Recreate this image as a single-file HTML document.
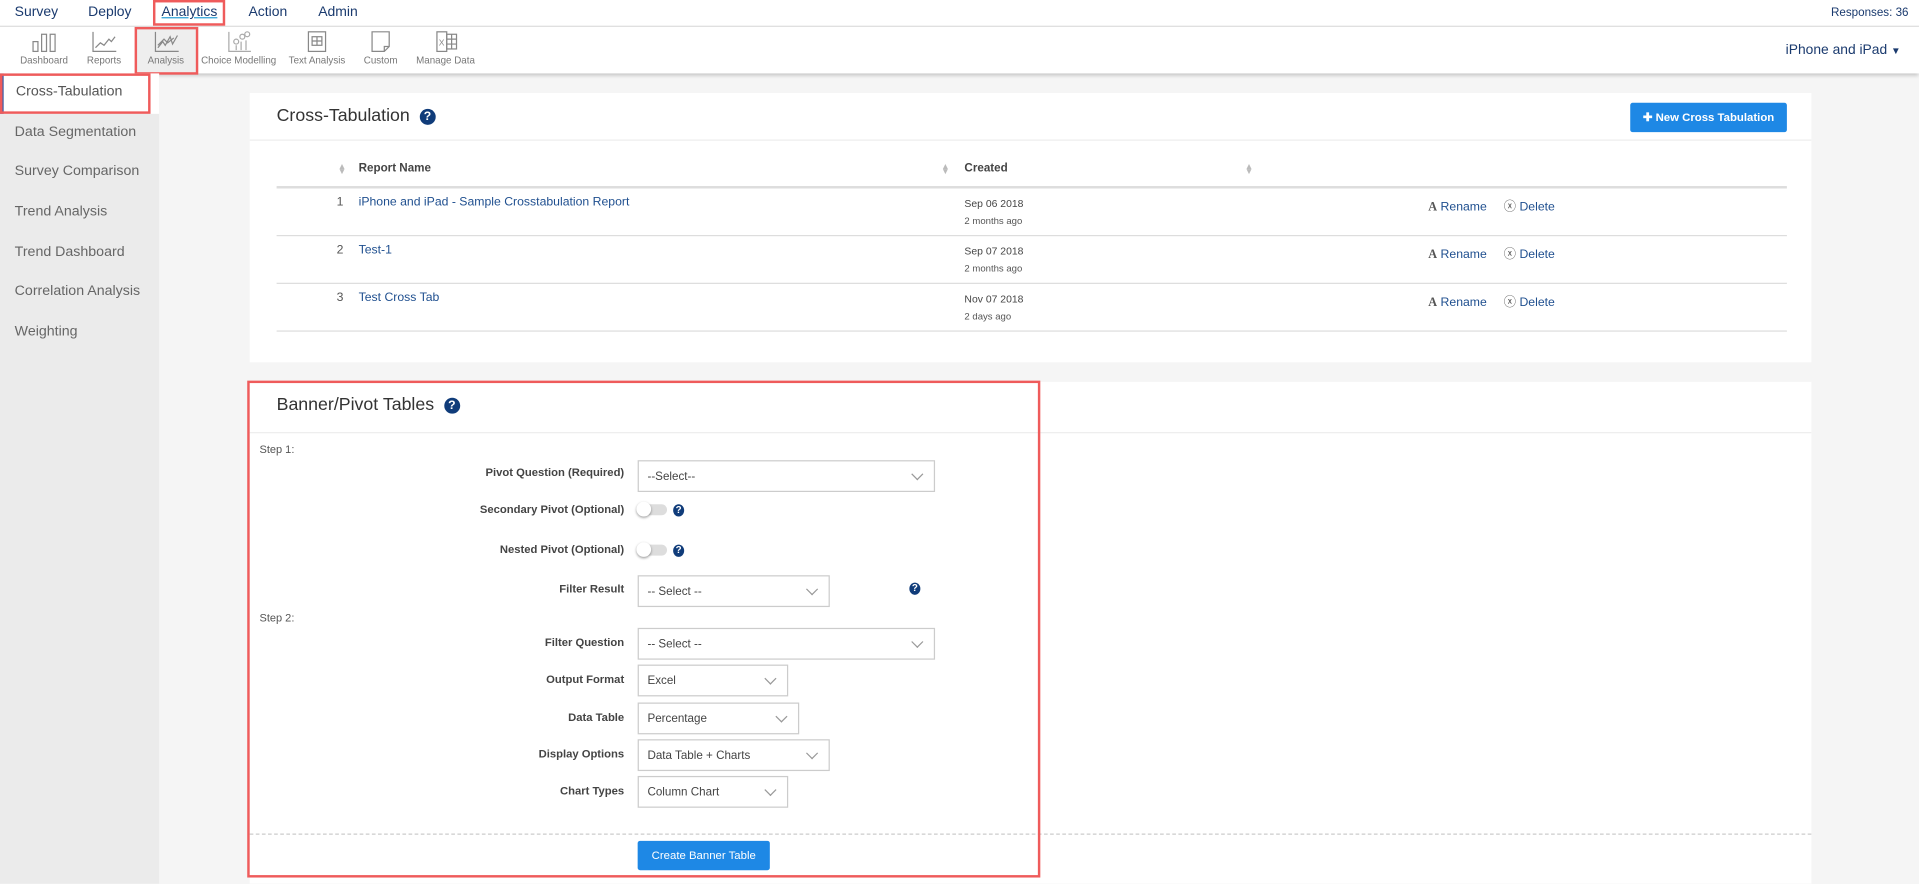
<!DOCTYPE html>
<html><head><meta charset="utf-8">
<style>
*{box-sizing:border-box;margin:0;padding:0}
html,body{width:1919px;height:884px;overflow:hidden;background:#f5f5f5}
#w{width:1568px;height:722px;transform:scale(1.2239);transform-origin:0 0;position:relative;font-family:"Liberation Sans",sans-serif;color:#333;background:#f5f5f5}
.a{position:absolute;white-space:nowrap}
.top{left:0;top:0;width:1568px;height:22px;background:#fff;border-bottom:1px solid #ddd}
.top span{position:absolute;top:4px;font-size:11.4px;color:#1a3a6e}
.sub{left:0;top:22px;width:1568px;height:38px;background:#fff;box-shadow:0 2px 3px rgba(0,0,0,.2)}
.ic{position:absolute;top:0;height:38px;text-align:center;font-size:8px;color:#777}
.ic svg{display:block;margin:3px auto 2px}
.side{left:0;top:60px;width:130px;height:662px;background:#ebebeb}
.side div{height:32.7px;line-height:30px;padding-left:12px;font-size:11.6px;color:#666}
.card{background:#fff}
.q{display:inline-block;width:13px;height:13px;border-radius:50%;background:#103c7a;color:#fff;font:bold 10px/13px "Liberation Sans",sans-serif;text-align:center}
.qs{width:9px;height:10px;font-size:8px;line-height:10px}
.lbl{font-size:9.2px;font-weight:bold;color:#444;text-align:right;width:300px;left:210px}
.sel{border:1px solid #ccc;background:#fff;font-size:9.5px;color:#444;padding:7px 0 0 7px;height:26px}
.sel:after{content:"";position:absolute;right:10px;top:7px;width:6px;height:6px;border-right:1px solid #999;border-bottom:1px solid #999;transform:rotate(45deg)}
.tog{width:24px;height:9px;border-radius:5px;background:#ddd}
.tog:before{content:"";position:absolute;left:-1px;top:-2px;width:12px;height:12px;border-radius:50%;background:#fff;box-shadow:0 1px 2px rgba(0,0,0,.4)}
.lnk{color:#1f4f8f;font-size:10px}
.dt{font-size:8.5px;color:#444}
.sm{font-size:7.8px;color:#555}
.hl{height:1px;background:#ddd}
.srt{font-size:7px;color:#bbb;line-height:4px}
.ttl{font-size:14.5px;color:#333}
</style></head><body><div id="w">
<div class="a top">
<span style="left:12px">Survey</span><span style="left:72px">Deploy</span>
<span style="left:132px;text-decoration:underline;text-decoration-color:#2a9fd6">Analytics</span>
<span style="left:203px">Action</span><span style="left:260px">Admin</span>
<span style="left:1496px;top:5px;font-size:9.5px">Responses: 36</span>
</div>
<div class="a" style="left:125px;top:0;width:59px;height:21px;border:2px solid #ef5b5b"></div>
<div class="a sub">
<div class="ic" style="left:10px;width:52px"><svg width="22" height="18" viewBox="0 0 22 18" fill="none" stroke="#888"><rect x="2" y="9" width="4" height="8"/><rect x="9" y="3" width="4" height="14"/><rect x="16" y="3" width="4" height="14"/></svg>Dashboard</div>
<div class="ic" style="left:62px;width:46px"><svg width="22" height="18" viewBox="0 0 22 18" fill="none" stroke="#888"><path d="M2 1V17H21M4 14L8 10L11 12L15 7L17 9L20 5"/></svg>Reports</div>
<div class="ic" style="left:110px;width:51px;background:#eee"><svg width="22" height="18" viewBox="0 0 22 18" fill="none" stroke="#888"><path d="M2 1V17H21M4 14L8 9L10 12L14 5L16 11L20 4M4 12L9 7L12 10L17 6"/></svg>Analysis</div>
<div class="ic" style="left:162px;width:66px"><svg width="22" height="18" viewBox="0 0 22 18" fill="none" stroke="#aaa"><path d="M3 1V17H21M9 16V12M13 16V9M17 16V8"/><circle cx="9" cy="9" r="2"/><circle cx="14" cy="5" r="2"/><circle cx="18" cy="3" r="2"/></svg>Choice Modelling</div>
<div class="ic" style="left:232px;width:54px"><svg width="22" height="18" viewBox="0 0 22 18" fill="none" stroke="#888"><rect x="4" y="1" width="14" height="16"/><rect x="7" y="5" width="8" height="7"/><path d="M11 5V12M7 8.5H15"/></svg>Text Analysis</div>
<div class="ic" style="left:290px;width:42px"><svg width="22" height="18" viewBox="0 0 22 18" fill="none" stroke="#888"><path d="M4 1H18V13L14 17H4Z M14 17V13H18"/></svg>Custom</div>
<div class="ic" style="left:336px;width:56px"><svg width="22" height="18" viewBox="0 0 22 18" fill="none" stroke="#888"><rect x="4" y="1" width="8" height="16"/><rect x="12" y="3" width="8" height="12"/><path d="M12 7H20M12 11H20M16 3V15"/><text x="5.5" y="12" font-size="7" fill="#888" stroke="none" font-family="Liberation Sans">X</text></svg>Manage Data</div>
<span class="a" style="left:1459px;top:13px;font-size:11.3px;color:#1a3a6e">iPhone and iPad <span style="font-size:8px">▼</span></span>
</div>
<div class="a" style="left:110px;top:22px;width:52px;height:39px;border:2px solid #ef5b5b"></div>
<div class="a side">
<div style="background:#fff;border-left:3px solid #3a5ea8;padding-left:10px;color:#555">Cross-Tabulation</div>
<div>Data Segmentation</div><div>Survey Comparison</div><div>Trend Analysis</div><div>Trend Dashboard</div><div>Correlation Analysis</div><div>Weighting</div>
</div>
<div class="a" style="left:0;top:60px;width:123px;height:33px;border:2px solid #ef5b5b"></div>

<div class="a card" style="left:204px;top:76px;width:1276px;height:220px">
<div class="a ttl" style="left:22px;top:11px">Cross-Tabulation <span class="q" style="margin-left:4px;vertical-align:1px">?</span></div>
<div class="a hl" style="left:0;top:38px;width:1276px;background:#eee"></div>
<div class="a" style="left:1128px;top:8px;width:128px;height:24px;background:#1e88e5;border-radius:2px;color:#fff;font-size:9.3px;font-weight:bold;text-align:center;line-height:24px">✚ New Cross Tabulation</div>
<div class="a srt" style="left:72px;top:59px">▲<br>▼</div>
<div class="a" style="left:89px;top:56px;font-size:9.5px;font-weight:bold;color:#444">Report Name</div>
<div class="a srt" style="left:565px;top:59px">▲<br>▼</div>
<div class="a" style="left:584px;top:56px;font-size:9.5px;font-weight:bold;color:#444">Created</div>
<div class="a srt" style="left:813px;top:59px">▲<br>▼</div>
<div class="a" style="left:22px;top:76px;width:1234px;height:2px;background:#ddd"></div>
<div class="a hl" style="left:22px;top:116px;width:1234px"></div>
<div class="a hl" style="left:22px;top:155px;width:1234px"></div>
<div class="a hl" style="left:22px;top:194px;width:1234px"></div>

<div class="a lnk" style="left:71px;top:84px;color:#555">1</div><div class="a lnk" style="left:89px;top:84px">iPhone and iPad - Sample Crosstabulation Report</div>
<div class="a dt" style="left:584px;top:85px">Sep 06 2018</div><div class="a sm" style="left:584px;top:100px">2 months ago</div>
<div class="a lnk" style="left:71px;top:123px;color:#555">2</div><div class="a lnk" style="left:89px;top:123px">Test-1</div>
<div class="a dt" style="left:584px;top:124px">Sep 07 2018</div><div class="a sm" style="left:584px;top:139px">2 months ago</div>
<div class="a lnk" style="left:71px;top:162px;color:#555">3</div><div class="a lnk" style="left:89px;top:162px">Test Cross Tab</div>
<div class="a dt" style="left:584px;top:163px">Nov 07 2018</div><div class="a sm" style="left:584px;top:178px">2 days ago</div>
<div class="a lnk" style="left:963px;top:84px"><b style="font-family:'Liberation Serif';color:#555">A</b> Rename &nbsp;&nbsp;&nbsp;&nbsp;<span style="color:#555">ⓧ</span> Delete</div>
<div class="a lnk" style="left:963px;top:123px"><b style="font-family:'Liberation Serif';color:#555">A</b> Rename &nbsp;&nbsp;&nbsp;&nbsp;<span style="color:#555">ⓧ</span> Delete</div>
<div class="a lnk" style="left:963px;top:162px"><b style="font-family:'Liberation Serif';color:#555">A</b> Rename &nbsp;&nbsp;&nbsp;&nbsp;<span style="color:#555">ⓧ</span> Delete</div>
</div>

<div class="a card" style="left:204px;top:312px;width:1276px;height:410px"></div>
<div class="a ttl" style="left:226px;top:323px">Banner/Pivot Tables <span class="q" style="margin-left:4px;vertical-align:1px">?</span></div>
<div class="a hl" style="left:204px;top:353px;width:1276px;background:#eee"></div>
<div class="a" style="left:212px;top:362px;font-size:9px;color:#555">Step 1:</div>
<div class="a lbl" style="top:381px">Pivot Question (Required)</div>
<div class="a sel" style="left:521px;top:376px;width:243px">--Select--</div>
<div class="a lbl" style="top:411px">Secondary Pivot (Optional)</div>
<div class="a tog" style="left:521px;top:412px"></div><span class="a q qs" style="left:550px;top:412px">?</span>
<div class="a lbl" style="top:444px">Nested Pivot (Optional)</div>
<div class="a tog" style="left:521px;top:445px"></div><span class="a q qs" style="left:550px;top:445px">?</span>
<div class="a lbl" style="top:476px">Filter Result</div>
<div class="a sel" style="left:521px;top:470px;width:157px">-- Select --</div>
<span class="a q qs" style="left:743px;top:476px">?</span>
<div class="a" style="left:212px;top:500px;font-size:9px;color:#555">Step 2:</div>
<div class="a lbl" style="top:520px">Filter Question</div>
<div class="a sel" style="left:521px;top:513px;width:243px">-- Select --</div>
<div class="a lbl" style="top:550px">Output Format</div>
<div class="a sel" style="left:521px;top:543px;width:123px">Excel</div>
<div class="a lbl" style="top:581px">Data Table</div>
<div class="a sel" style="left:521px;top:574px;width:132px">Percentage</div>
<div class="a lbl" style="top:611px">Display Options</div>
<div class="a sel" style="left:521px;top:604px;width:157px">Data Table + Charts</div>
<div class="a lbl" style="top:641px">Chart Types</div>
<div class="a sel" style="left:521px;top:634px;width:123px">Column Chart</div>
<div class="a" style="left:204px;top:681px;width:1276px;border-top:1px dashed #ccc"></div>
<div class="a" style="left:521px;top:687px;width:108px;height:24px;background:#1e88e5;border-radius:2px;color:#fff;font-size:9.3px;text-align:center;line-height:24px">Create Banner Table</div>
<div class="a" style="left:202px;top:311px;width:648px;height:406px;border:2px solid #ef5b5b"></div>
</div></body></html>
